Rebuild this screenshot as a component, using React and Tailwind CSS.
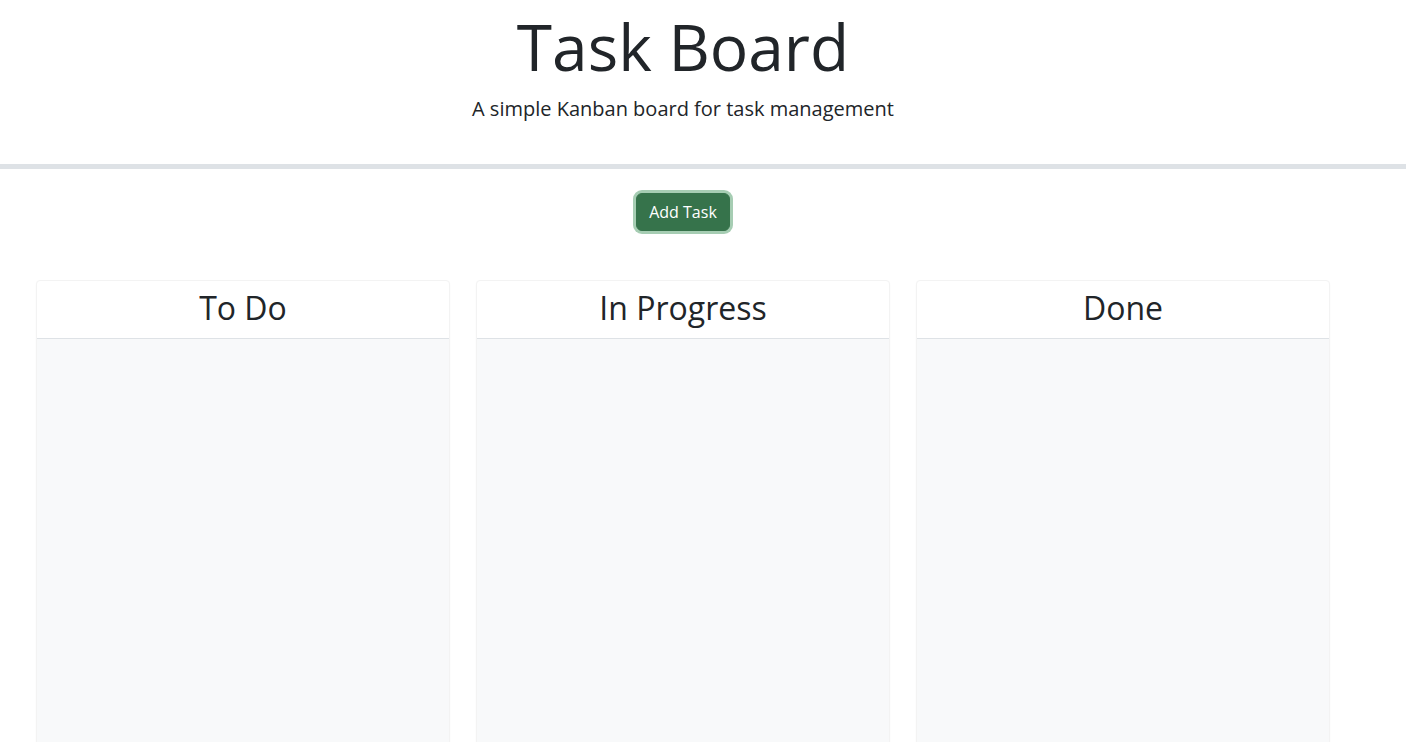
export default function App() {
  const cols = ["To Do", "In Progress", "Done"];
  return (
    <div className="min-h-[742px] bg-white text-[#212529]" style={{ fontFamily: '"Open Sans", sans-serif' }}>
      <header className="w-[1366px] pt-[9px] text-center">
        <h1 className="text-[64px] leading-[1.2] font-normal">Task Board</h1>
        <p className="mt-[8px] text-[20px] leading-[1.5]">A simple Kanban board for task management</p>
      </header>
      <div className="mt-[40px] h-[5px] bg-[#dee2e6]" />
      <div className="mt-[24px] flex w-[1366px] justify-center">
        <button className="h-[38px] rounded-[6px] border border-[#36734b] bg-[#36734b] px-[12px] text-[16px] leading-[24px] text-white ring-[3px] ring-[#a6cdb3]">
          Add Task
        </button>
      </div>
      <div className="mt-[49px] flex gap-[26px] pl-[36px]">
        {cols.map((c) => (
          <div key={c} className="w-[414px] rounded-t-[4px] border border-[#f3f3f3] bg-white shadow-[0_1px_2px_rgba(0,0,0,0.03)]">
            <div className="flex h-[58px] items-center justify-center border-b border-[#dee2e6] pb-[2px]">
              <h2 className="text-[32px] leading-[1.2] font-normal">{c}</h2>
            </div>
            <div className="h-[420px] bg-[#f8f9fa]" />
          </div>
        ))}
      </div>
    </div>
  );
}
